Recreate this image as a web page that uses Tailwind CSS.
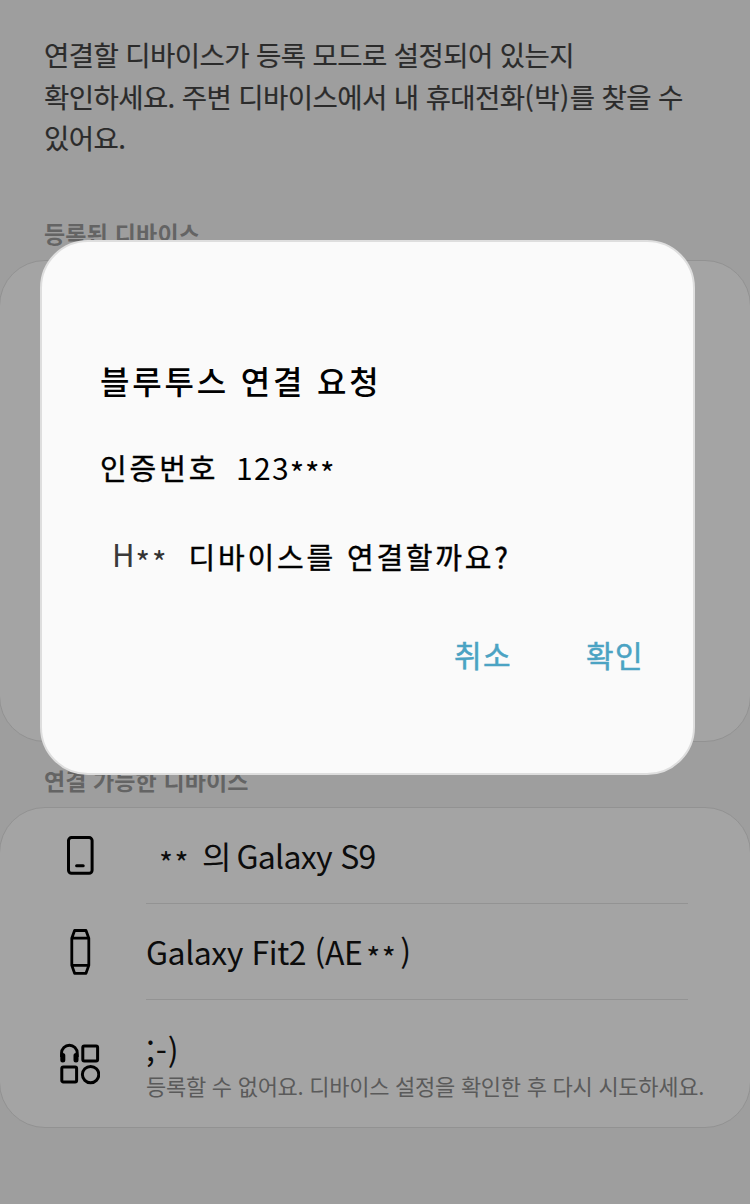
<!DOCTYPE html>
<html lang="ko">
<head>
<meta charset="utf-8">
<title>블루투스</title>
<script src="https://cdn.jsdelivr.net/npm/@tailwindcss/browser@4"></script>
</head>
<body class="bg-[#9e9e9e]">
<div class="relative flex h-[1204px] w-[750px] flex-col overflow-hidden bg-[#9e9e9e] font-['Noto_Sans_CJK_KR',sans-serif] whitespace-nowrap">
  <p class="mt-[34px] ml-[44px] h-[184px] text-[27.5px] leading-[41.5px] tracking-[-0.58px] text-[#2b2b2b] [-webkit-text-stroke:0.2px_#2b2b2b]">연결할 디바이스가 등록 모드로 설정되어 있는지<br>확인하세요. 주변 디바이스에서 내 휴대전화<span class="tracking-[0.4px]">(박)</span>를 찾을 수<br>있어요.</p>
  <h2 class="ml-[44px] h-[42px] text-[23px] leading-[30px] font-bold tracking-[0.2px] text-[#646464]">등록된 디바이스</h2>
  <section class="-mx-px h-[482px] shrink-0 rounded-[46px] border border-[#929292] bg-[#a4a4a4]"></section>
  <h2 class="mt-[23px] ml-[44px] h-[42px] text-[23px] leading-[30px] font-bold tracking-[0.1px] text-[#646464]">연결 가능한 디바이스</h2>
  <section class="-mx-px flex h-[321px] shrink-0 flex-col rounded-[46px] border border-[#929292] bg-[#a4a4a4] text-[32px] leading-[40px] text-[#0c0c0c]">
    <div class="flex h-[96px] shrink-0">
      <div class="flex w-[146px] items-center pl-[66px]">
        <svg class="h-[40px] w-[28px]" viewBox="0 0 28 40" fill="none" stroke="#000" stroke-width="3" stroke-linecap="round"><rect x="2.5" y="1.6" width="23.6" height="35.6" rx="3"/><path d="M10.6 29.8h6.6"/></svg>
      </div>
      <div class="flex w-[542px] items-center border-b border-[#939393]"><span class="ml-[13px] w-[43px] pt-[12px] text-[30px] tracking-[1.5px]">**</span><span class="pb-[2px] tracking-[-0.7px]"><span class="tracking-[-2px]">의 </span>Galaxy S9</span></div>
    </div>
    <div class="flex h-[96px] shrink-0">
      <div class="flex w-[146px] items-center pl-[68px]">
        <svg class="h-[46px] w-[24px]" viewBox="0 0 24 46" fill="none" stroke="#000" stroke-width="2.8" stroke-linejoin="round"><path d="M3.8 9.2L6.6 1.5h11.4l2.8 7.7v27.2l-2.8 7.9H6.6l-2.8-7.9zM3.8 9.2h17M3.8 36.4h17"/></svg>
      </div>
      <div class="flex w-[542px] items-center border-b border-[#939393]"><span class="pb-[2px] tracking-[-0.45px]">Galaxy Fit2 (AE</span><span class="ml-[4px] w-[34px] pt-[11px] text-[30px] tracking-[1.5px]">**</span><span class="pb-[2px]">)</span></div>
    </div>
    <div class="flex flex-1">
      <div class="w-[146px] pt-[43px] pl-[58px]">
        <svg class="h-[42px] w-[42px]" viewBox="0 0 42 42" fill="none" stroke="#000" stroke-width="3" stroke-linejoin="round"><path d="M3.6 14v-4a7.8 7.8 0 0 1 15.6 0v4"/><path d="M4.8 12.5v4.5M18 12.5v4.5" stroke-width="5" stroke-linecap="round"/><rect x="24.8" y="3" width="14.8" height="15" rx="1.5"/><rect x="3.8" y="24" width="14.8" height="15" rx="1.5"/><circle cx="32.6" cy="31.6" r="8.2"/></svg>
      </div>
      <div class="pt-[30px]">
        <div class="h-[37px] leading-[40px] tracking-[0.8px]">;-)</div>
        <div class="text-[22px] leading-[36px] tracking-[-0.27px] text-[#5a5a5a]">등록할 수 없어요. 디바이스 설정을 확인한 후 다시 시도하세요.</div>
      </div>
    </div>
  </section>

  <div role="dialog" class="absolute top-[240px] left-[40px] flex h-[535px] w-[655px] flex-col rounded-[48px] border-2 border-[#dedede] bg-[#fafafa] pl-[58px] text-black">
    <h1 class="mt-[114px] text-[32px] leading-[48px] font-medium tracking-[2.8px]">블루투스 연결 요청</h1>
    <div class="mt-[41px] flex text-[29px] leading-[44px] tracking-[2.9px]"><span class="w-[136px] [-webkit-text-stroke:0.4px_black]">인증번호</span><span class="text-[30px] tracking-[1.3px]">123</span><span class="pt-[6px] text-[31px] tracking-[0.6px]">***</span></div>
    <div class="mt-[39px] flex text-[29px] leading-[44px] tracking-[2.8px]"><span class="-mt-[2px] ml-[12px] text-[31px] text-[#3a3a3a] tracking-[1px]">H</span><span class="w-[53px] pt-[6px] text-[31px] tracking-[2px] text-[#333]">**</span><span class="[-webkit-text-stroke:0.4px_black]">디바이스를 연결할까요?</span></div>
    <div class="mt-[48px] flex text-[30px] leading-[44px] text-[#4ba3c3] [-webkit-text-stroke:0.5px_#4ba3c3]"><button class="ml-[354px] w-[132px] text-left tracking-[1.4px]">취소</button><button class="tracking-[1.4px]">확인</button></div>
  </div>
</div>
</body>
</html>
